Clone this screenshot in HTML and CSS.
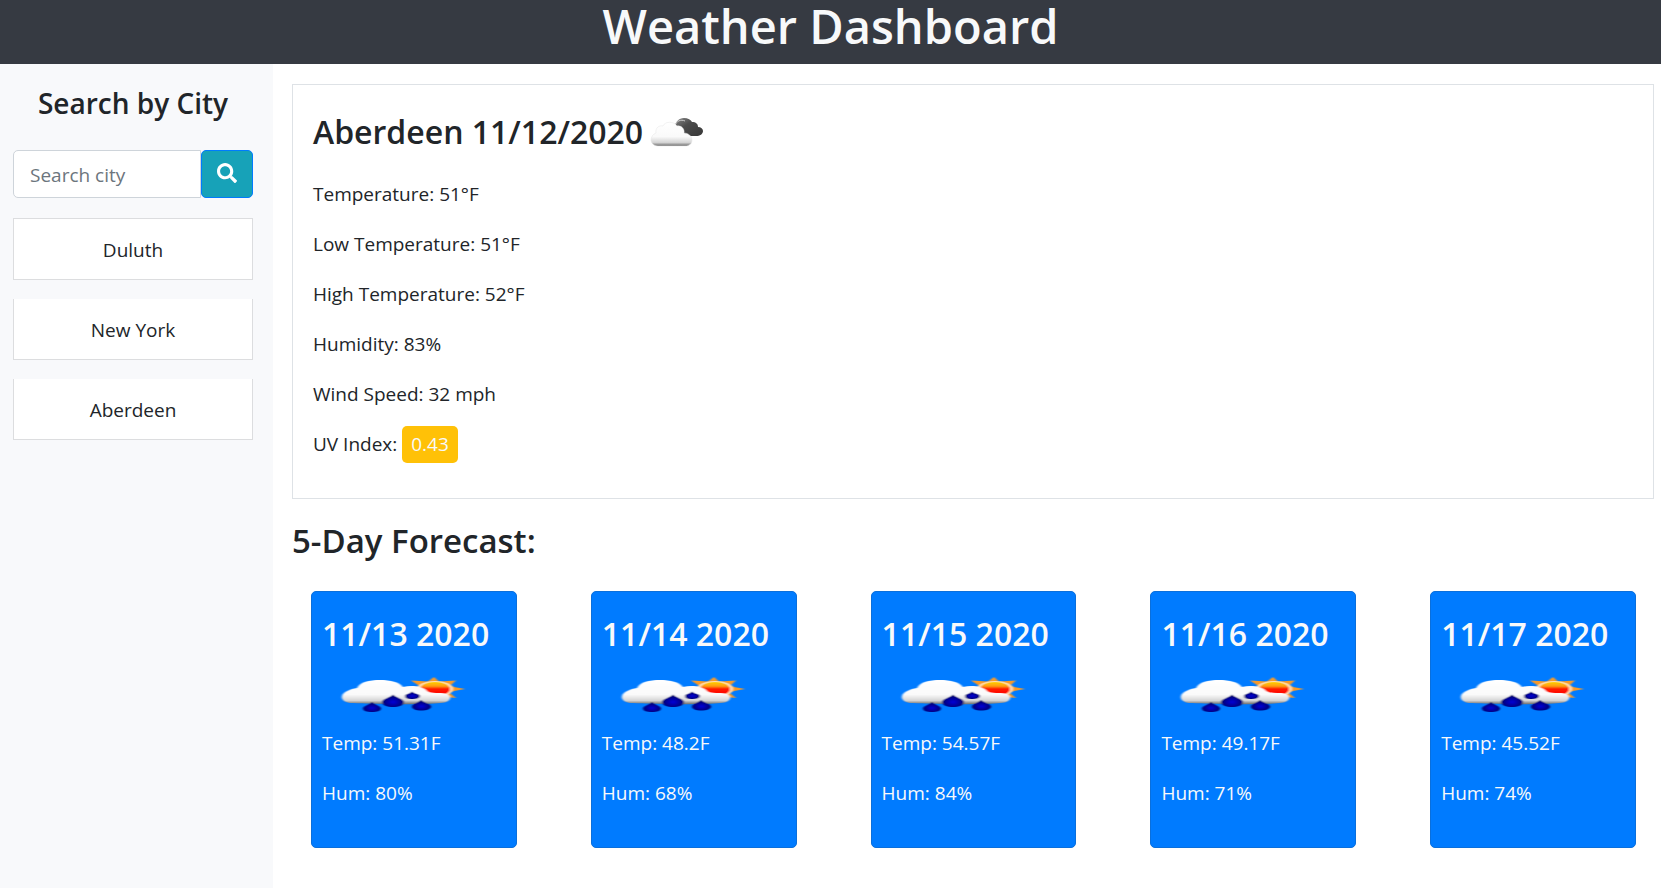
FILE: index.html
```html
<!DOCTYPE html>
<html lang="en">
<head>
<meta charset="utf-8">
<title>Weather Dashboard</title>
<link rel="stylesheet" href="styles.css">
</head>
<body>
<svg class="defs" aria-hidden="true">
  <defs>
    <linearGradient id="cloudFill" x1="0" y1="0" x2="0" y2="1">
      <stop offset="0" stop-color="#fff"/><stop offset=".6" stop-color="#fafafa"/><stop offset=".85" stop-color="#d5d5d5"/><stop offset="1" stop-color="#6d6d6d"/>
    </linearGradient>
    <linearGradient id="darkFill" x1="0" y1="0" x2="1" y2="1">
      <stop offset="0" stop-color="#888"/><stop offset=".4" stop-color="#4c4c4c"/><stop offset="1" stop-color="#383838"/>
    </linearGradient>
    <linearGradient id="sunFill" x1="0" y1="0" x2="0" y2="1">
      <stop offset="0" stop-color="#ffd000"/><stop offset=".3" stop-color="#ff9a10"/><stop offset=".5" stop-color="#ff1a00"/><stop offset="1" stop-color="#f00"/>
    </linearGradient>
    <radialGradient id="dropFill" cx=".5" cy=".6" r=".6">
      <stop offset="0" stop-color="#0000d8"/><stop offset="1" stop-color="#000058"/>
    </radialGradient>
    <filter id="soft" x="-5%" y="-10%" width="110%" height="120%"><feGaussianBlur stdDeviation=".8 .4"/></filter>
    <symbol id="rain" viewBox="0 0 150 60">
      <g filter="url(#soft)">
        <path fill="#f59a2a" d="M104 12L109 16.500L126 15.500L121 20L124 22L135 24L124 26L120 28L126 33L108 31L90 24L88 20L81 15.500L98 16.500Z"/>
        <ellipse cx="105" cy="24" rx="18" ry="8" fill="#ffe2b8"/>
        <ellipse cx="105" cy="24" rx="15" ry="7" fill="url(#sunFill)"/>
        <path fill="url(#cloudFill)" d="M20 38C14 37 11 34 12 31C13 27 20 24 27 23C30 17 39 15 50 15C61 15 69 17 73 22C81 20 93 21 97 26C100 28 106 28 111 28C118 28 121 31 120 34C118 37 114 38 110 38C96 40 36 39 20 38Z"/>
        <g fill="url(#dropFill)">
          <path d="M42 37C45 40 51 41 51 43.500C51 46 47 47 42 47C37 47 33 46 33 43.500C33 41 39 40 42 37Z"/>
          <path d="M63 29.500C66 33 74 34 74 37C74 40 69 42 63 42C57 42 52 40 52 37C52 34 60 33 63 29.500Z"/>
          <path d="M82 26.500C84 29 90 29 90 31C90 33 87 34 82 34C77 34 75 33 75 31C75 29 80 29 82 26.500Z"/>
          <path d="M91 35C94 38 101 39 101 41.500C101 44 97 45.500 91 45.500C86 45.500 82 44 82 41.500C82 39 88 38 91 35Z"/>
        </g>
      </g>
    </symbol>
  </defs>
</svg>

<header class="banner"><h1>Weather Dashboard</h1></header>
<div class="layout">
  <aside class="sidebar">
    <h2 class="sidebar-title"><label for="city">Search by City</label></h2>
    <form class="search">
      <input id="city" type="text" placeholder="Search city">
      <button type="button" aria-label="Search">
        <svg viewBox="0 0 512 512" width="20" height="20"><path fill="#fff" d="M505 442.700L405.300 343c-4.500-4.500-10.600-7-17-7H372c27.600-35.300 44-79.700 44-128C416 93.100 322.900 0 208 0S0 93.100 0 208s93.100 208 208 208c48.300 0 92.700-16.400 128-44v16.300c0 6.400 2.500 12.500 7 17l99.700 99.700c9.400 9.400 24.600 9.400 33.900 0l28.300-28.300c9.400-9.400 9.400-24.600.1-34zM208 336c-70.700 0-128-57.200-128-128 0-70.700 57.200-128 128-128 70.700 0 128 57.200 128 128 0 70.700-57.200 128-128 128z"/></svg>
      </button>
    </form>
    <ul class="cities">
      <li>Duluth</li>
      <li>New York</li>
      <li>Aberdeen</li>
    </ul>
  </aside>
  <main class="content">
    <section class="current">
      <h2>Aberdeen 11/12/2020
        <svg class="cloud" viewBox="0 0 54 30" width="54" height="30" aria-hidden="true">
          <path fill="url(#darkFill)" d="M25 10C25 5 29 1 34 1C38 1 41 3 42 5C46 5 48 7 48 10C51 10 53 12 53 14C53 17 50 19 46 19H36Z"/>
          <path fill="none" stroke="#ccc" d="M25 9C26 4 31 2 35 4"/>
          <path fill="url(#cloudFill)" stroke="#e4e4e4" stroke-width=".5" d="M8 29C4 29 1 26 1 23C1 20 3 17 6 16C5 11 9 8 13 9C15 4 24 4 27 9C31 8 35 12 34 16C38 16 42 19 42 23C42 27 39 29 35 29Z"/>
        </svg>
      </h2>
      <p>Temperature: 51°F</p>
      <p>Low Temperature: 51°F</p>
      <p>High Temperature: 52°F</p>
      <p>Humidity: 83%</p>
      <p>Wind Speed: 32 mph</p>
      <p>UV Index: <span class="uv">0.43</span></p>
    </section>
    <h2 class="forecast-title">5-Day Forecast:</h2>
    <section class="forecast">
      <article class="card"><h3>11/13 2020</h3><svg class="rain" viewBox="0 0 150 60"><use href="#rain"/></svg><p>Temp: 51.31F</p><p>Hum: 80%</p></article>
      <article class="card"><h3>11/14 2020</h3><svg class="rain" viewBox="0 0 150 60"><use href="#rain"/></svg><p>Temp: 48.2F</p><p>Hum: 68%</p></article>
      <article class="card"><h3>11/15 2020</h3><svg class="rain" viewBox="0 0 150 60"><use href="#rain"/></svg><p>Temp: 54.57F</p><p>Hum: 84%</p></article>
      <article class="card"><h3>11/16 2020</h3><svg class="rain" viewBox="0 0 150 60"><use href="#rain"/></svg><p>Temp: 49.17F</p><p>Hum: 71%</p></article>
      <article class="card"><h3>11/17 2020</h3><svg class="rain" viewBox="0 0 150 60"><use href="#rain"/></svg><p>Temp: 45.52F</p><p>Hum: 74%</p></article>
    </section>
  </main>
</div>
</body>
</html>
```
FILE: styles.css
```css
* { box-sizing: border-box; }
body {
  margin: 0;
  background: #fff;
  color: #212529;
  font-family: "Segoe UI", "Open Sans", "Noto Sans", sans-serif;
  font-size: 19px;
  line-height: 30px;
}
h1, h2, h3, p, ul { margin: 0; padding: 0; }
h1, h2, h3 { font-weight: 600; }
.defs { position: absolute; width: 0; height: 0; }

.banner { padding-bottom: 12px; background: #363a42; color: #f8f9fa; text-align: center; }
.banner h1 { font-size: 47px; line-height: 52px; }

.layout { display: flex; align-items: flex-start; }
.sidebar { flex: 0 0 273px; min-width: 0; min-height: 824px; padding: 20px 20px 20px 13px; background: #f8f9fb; }
.sidebar-title { font-size: 28px; line-height: 38px; text-align: center; margin-bottom: 28px; }
.search { display: flex; margin-bottom: 20px; }
.search input {
  flex: 1; width: 100%; min-width: 0; height: 48px; padding: 2px 16px 0;
  border: 1px solid #ced4da; border-radius: 5px 0 0 5px;
  background: #fff; color: #495057; font: inherit;
}
.search input::placeholder { color: #6c757d; opacity: 1; }
.search button {
  flex: none; width: 52px; height: 48px; padding: 0 0 2px;
  border: 1px solid #007bff; border-radius: 5px; background: #17a2b8;
}
.search svg { display: block; margin: 0 auto; }
.cities { list-style: none; display: grid; gap: 19px; text-align: center; }
.cities li { padding: 16px 15px 14px; background: #fff; border: 1px solid #dcdddf; }
.cities li + li { border-top: 0; }

.content { flex: 1; min-width: 0; padding: 20px 7px 20px 19px; }
.current { padding: 23px 20px 39px; border: 1px solid #dee2e6; }
.current h2 { display: flex; align-items: center; gap: 7px; font-size: 32px; line-height: 48px; margin-bottom: 23px; }
.current p + p { margin-top: 20px; }
.uv { display: inline-block; padding: 3px 9px 4px; margin: -4px 0; border-radius: 5px; background: #ffc107; color: #f8f9fa; }
.forecast-title { margin: 20px 0 28px; font-size: 33px; line-height: 44px; }
.forecast { display: grid; grid-template-columns: repeat(5, minmax(0, 1fr)); gap: 74px; padding: 0 18px 0 19px; }
.card { padding: 19px 10px 39px; background: #007bff; border: 1px solid #0a6fdc; border-radius: 5px; color: #f8f9fa; }
.card h3 { font-size: 32px; line-height: 46px; white-space: nowrap; }
.rain { display: block; width: 150px; height: 60px; margin: 8px 0 3px 8px; }
.card p + p { margin-top: 20px; }
```
